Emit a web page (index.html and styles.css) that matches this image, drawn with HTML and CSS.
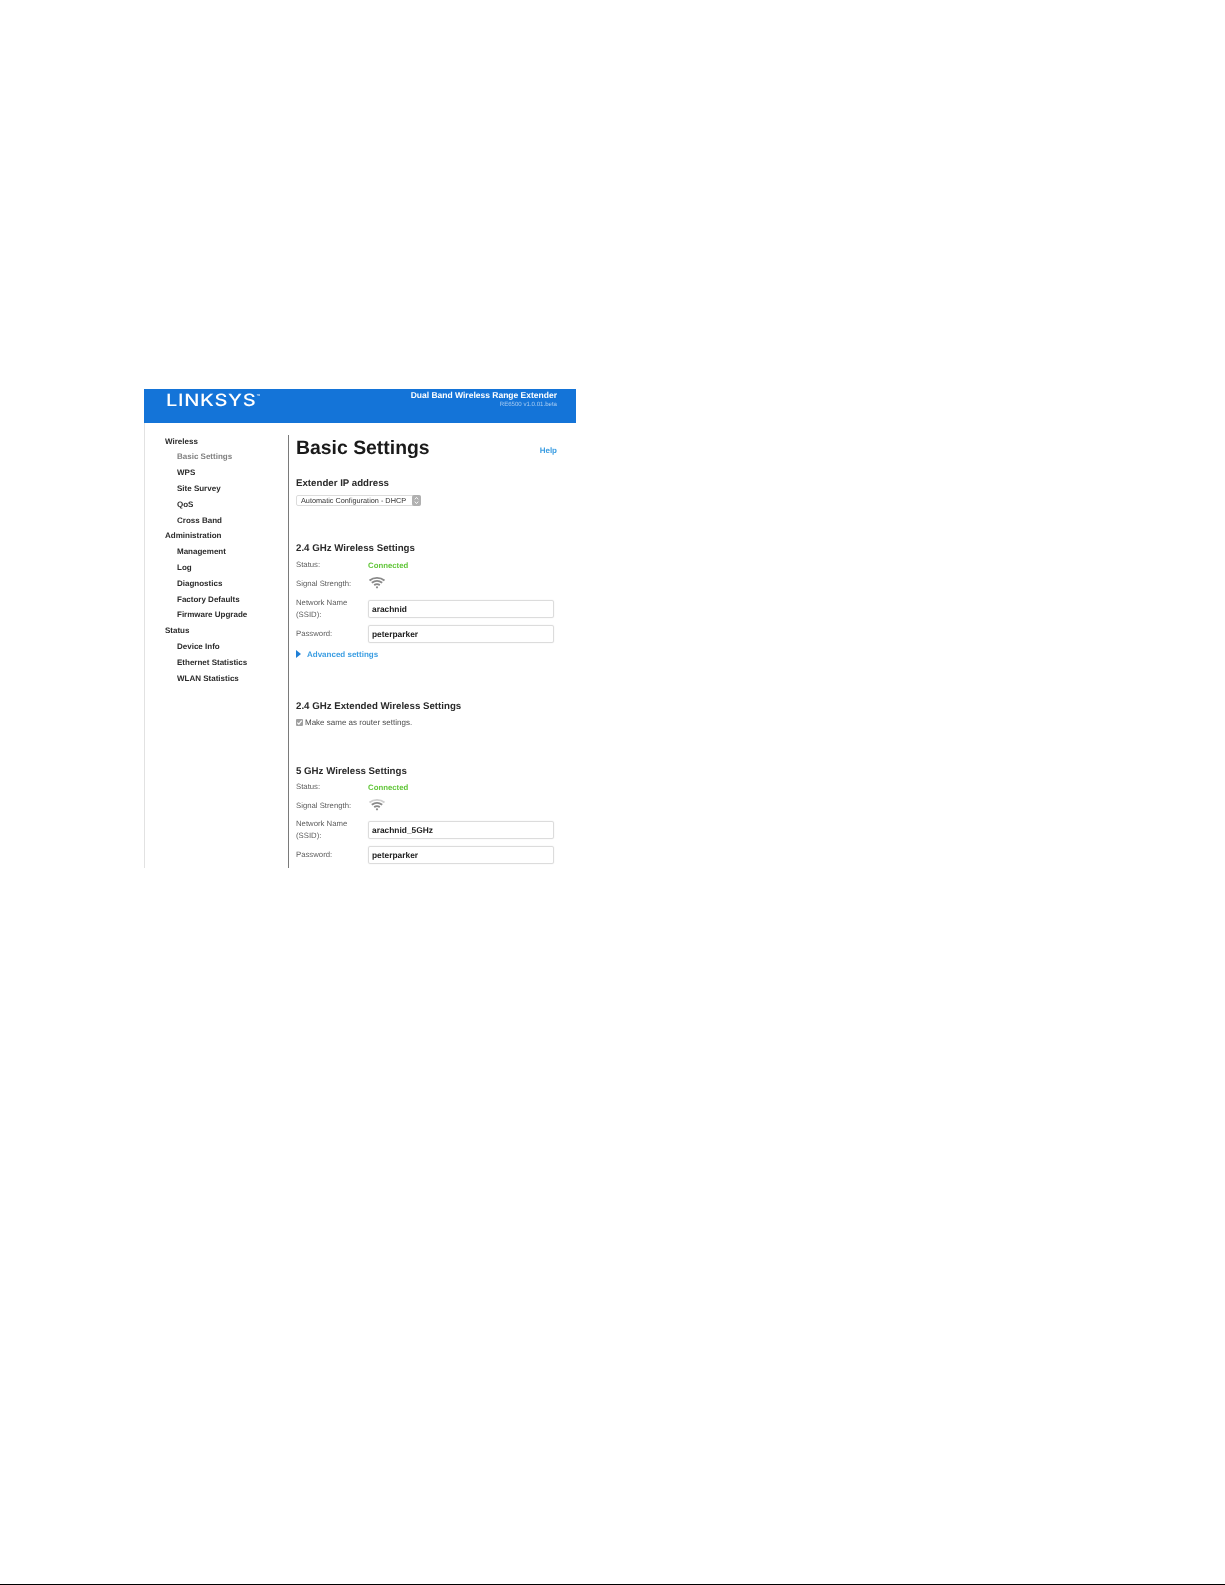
FILE: index.html
```html
<!DOCTYPE html>
<html lang="en">
<head>
<meta charset="utf-8">
<title>Linksys Basic Settings</title>
<link rel="stylesheet" href="styles.css">
</head>
<body>
<div class="shot">
  <header class="banner">
    <div class="logo">LINKSYS<span class="tm">™</span></div>
    <div class="product">
      <div class="product-name">Dual Band Wireless Range Extender</div>
      <div class="product-ver">RE6500 v1.0.01.beta</div>
    </div>
  </header>
  <div class="body">
    <nav class="nav">
      <div class="nav-group">Wireless</div>
      <div class="nav-item current">Basic Settings</div>
      <div class="nav-item">WPS</div>
      <div class="nav-item">Site Survey</div>
      <div class="nav-item">QoS</div>
      <div class="nav-item">Cross Band</div>
      <div class="nav-group">Administration</div>
      <div class="nav-item">Management</div>
      <div class="nav-item">Log</div>
      <div class="nav-item">Diagnostics</div>
      <div class="nav-item">Factory Defaults</div>
      <div class="nav-item">Firmware Upgrade</div>
      <div class="nav-group">Status</div>
      <div class="nav-item">Device Info</div>
      <div class="nav-item">Ethernet Statistics</div>
      <div class="nav-item">WLAN Statistics</div>
    </nav>
    <main class="main">
      <div class="title-row">
        <h1 class="title">Basic Settings</h1>
        <a class="help">Help</a>
      </div>
      <h2 class="head head-ip">Extender IP address</h2>
      <div class="select"><span>Automatic Configuration - DHCP</span><span class="stepper"><svg width="5" height="9" viewBox="0 0 5 9"><path d="M.8 3.4 2.5 1.4 4.2 3.4M.8 5.6 2.5 7.6 4.2 5.6" fill="none" stroke="#fff" stroke-width=".9"/></svg></span></div>

      <h2 class="head head-24">2.4 GHz Wireless Settings</h2>
      <div class="row row-status"><span class="label">Status:</span><span class="connected">Connected</span></div>
      <div class="row row-signal"><span class="label">Signal Strength:</span>
        <svg class="wifi" width="18" height="13" viewBox="0 0 18 13"><path d="M1.500 4.400C5.800 1 12.200 1 16.500 4.400M3.800 6.800C6.900 4.500 11.100 4.500 14.200 6.800M6.200 9.100C7.900 7.900 10.100 7.900 11.800 9.100" fill="none" stroke="#8a8a8a" stroke-width="1.900"/><circle cx="9" cy="11.300" r="1.100" fill="#8a8a8a"/></svg>
      </div>
      <div class="row row-ssid"><span class="label">Network Name<br>(SSID):</span><div class="field">arachnid</div></div>
      <div class="row row-pass"><span class="label">Password:</span><div class="field">peterparker</div></div>
      <a class="advanced"><span class="tri"></span>Advanced settings</a>

      <h2 class="head head-ext">2.4 GHz Extended Wireless Settings</h2>
      <div class="check-row"><span class="check"><svg width="7" height="7" viewBox="0 0 7 7"><path d="M1.300 3.600 2.900 5.200 5.700 1.600" fill="none" stroke="#fff" stroke-width="1.200"/></svg></span>Make same as router settings.</div>

      <h2 class="head head-5">5 GHz Wireless Settings</h2>
      <div class="row row-status tight"><span class="label">Status:</span><span class="connected">Connected</span></div>
      <div class="row row-signal"><span class="label">Signal Strength:</span>
        <svg class="wifi" width="18" height="13" viewBox="0 0 18 13"><path d="M1.500 4.400C5.800 1 12.200 1 16.500 4.400" fill="none" stroke="#cfcfcf" stroke-width="1.900"/><path d="M3.800 6.800C6.900 4.500 11.100 4.500 14.200 6.800M6.200 9.100C7.900 7.900 10.100 7.900 11.800 9.100" fill="none" stroke="#8a8a8a" stroke-width="1.900"/><circle cx="9" cy="11.300" r="1.100" fill="#8a8a8a"/></svg>
      </div>
      <div class="row row-ssid tight"><span class="label">Network Name<br>(SSID):</span><div class="field">arachnid_5GHz</div></div>
      <div class="row row-pass"><span class="label">Password:</span><div class="field">peterparker</div></div>
    </main>
  </div>
</div>
<div class="page-rule"></div>
</body>
</html>
```
FILE: styles.css
```css
html, body { margin: 0; padding: 0; height: 1585px; background: #fff; }
body {
  display: flex;
  flex-direction: column;
  font-family: "Liberation Sans", Arial, sans-serif;
  color: #1c1c1c;
  overflow: hidden;
  text-rendering: geometricPrecision;
}
.shot {
  width: 432px;
  height: 479px;
  margin: 389px 0 0 144px;
  overflow: hidden;
  filter: blur(0.45px);
}
.banner {
  height: 34px;
  background: #1474d8;
  color: #fff;
  display: flex;
  justify-content: space-between;
  padding: 0 19px 0 22px;
}
.logo {
  font-family: Inter, "Liberation Sans", sans-serif;
  font-weight: 500;
  font-size: 17px;
  line-height: 13px;
  letter-spacing: 0.6px;
  margin-top: 2px;
  height: 13px;
  transform: scaleX(1.18);
  transform-origin: left center;
}
.tm { font-size: 5px; vertical-align: 8px; letter-spacing: 0; }
.product { text-align: right; padding-top: 1px; }
.product-name { font-size: 8.5px; font-weight: 700; line-height: 11px; }
.product-ver { font-size: 6.1px; line-height: 8px; color: #a9cdf2; }
.body {
  display: flex;
  height: 445px;
  border-left: 1px solid #e2e2e2;
}
.nav {
  width: 143px;
  box-sizing: border-box;
  padding: 10.5px 0 0 20px;
  flex: none;
  font-size: 8px;
  font-weight: 700;
  line-height: 15.82px;
  color: #2a2a2a;
}
.nav-item { padding-left: 12px; }
.current { color: #808080; }
.main {
  flex: 1;
  margin-top: 12px;
  border-left: 1px solid #7a7a7a;
  padding: 0 19px 0 7px;
  overflow: hidden;
}
.title-row { display: flex; justify-content: space-between; align-items: flex-start; height: 26px; }
.title { margin: 0; font-size: 19.4px; line-height: 26px; font-weight: 700; color: #1a1a1a; }
.help { font-size: 8px; font-weight: 700; color: #3a9de2; line-height: 10px; margin-top: 11px; }
.head { margin: 0; font-size: 9.7px; line-height: 12px; font-weight: 700; color: #2a2a2a; }
.head-ip { margin-top: 17px; }
.head-24 { margin-top: 37px; }
.head-ext { margin-top: 41px; }
.head-5 { margin-top: 38px; }
.select {
  display: flex;
  justify-content: space-between;
  align-items: center;
  box-sizing: border-box;
  width: 125px;
  height: 11px;
  margin-top: 5px;
  padding-left: 4px;
  border: 1px solid #dcdcdc;
  border-radius: 2px;
  font-size: 7.3px;
  color: #333;
  background: #fff;
}
.stepper {
  width: 9px;
  height: 11px;
  margin-right: -1px;
  background: #b0b0b0;
  border-radius: 2px;
  display: flex;
  align-items: center;
  justify-content: center;
}
.row { display: flex; align-items: center; }
.label { width: 72px; flex: none; font-size: 7.75px; line-height: 12px; color: #5c5c5c; }
.row-status { height: 12px; margin-top: 4px; }
.row-signal { height: 14px; margin-top: 6px; }
.row-ssid { height: 18px; margin-top: 9px; }
.row-pass { height: 18px; margin-top: 7px; }
.row-status.tight { margin-top: 3px; }
.row-ssid.tight { margin-top: 8px; }
.connected { font-size: 7.8px; font-weight: 700; color: #62c63a; }
.wifi { margin-top: -4px; }
.field {
  box-sizing: border-box;
  width: 186px;
  height: 18px;
  border: 1px solid #dcdcdc;
  border-radius: 2px;
  box-shadow: 0 0 1px #d4d4d4;
  padding-left: 3px;
  font-size: 8.4px;
  font-weight: 700;
  line-height: 16px;
  color: #1c1c1c;
}
.advanced {
  display: flex;
  align-items: center;
  margin-top: 5px;
  height: 12px;
  font-size: 8px;
  font-weight: 700;
  color: #3a9de2;
}
.tri {
  width: 0;
  height: 0;
  border-left: 5px solid #1f7fd6;
  border-top: 4px solid transparent;
  border-bottom: 4px solid transparent;
  margin-right: 6px;
}
.check-row {
  display: flex;
  align-items: center;
  gap: 2px;
  margin-top: 3px;
  height: 12px;
  font-size: 8px;
  color: #4a4a4a;
}
.check {
  width: 7px;
  height: 7px;
  background: #a0a0a0;
  border-radius: 1px;
  display: flex;
}
.page-rule {
  margin-top: auto;
  height: 1px;
  background: #000;
}
```
